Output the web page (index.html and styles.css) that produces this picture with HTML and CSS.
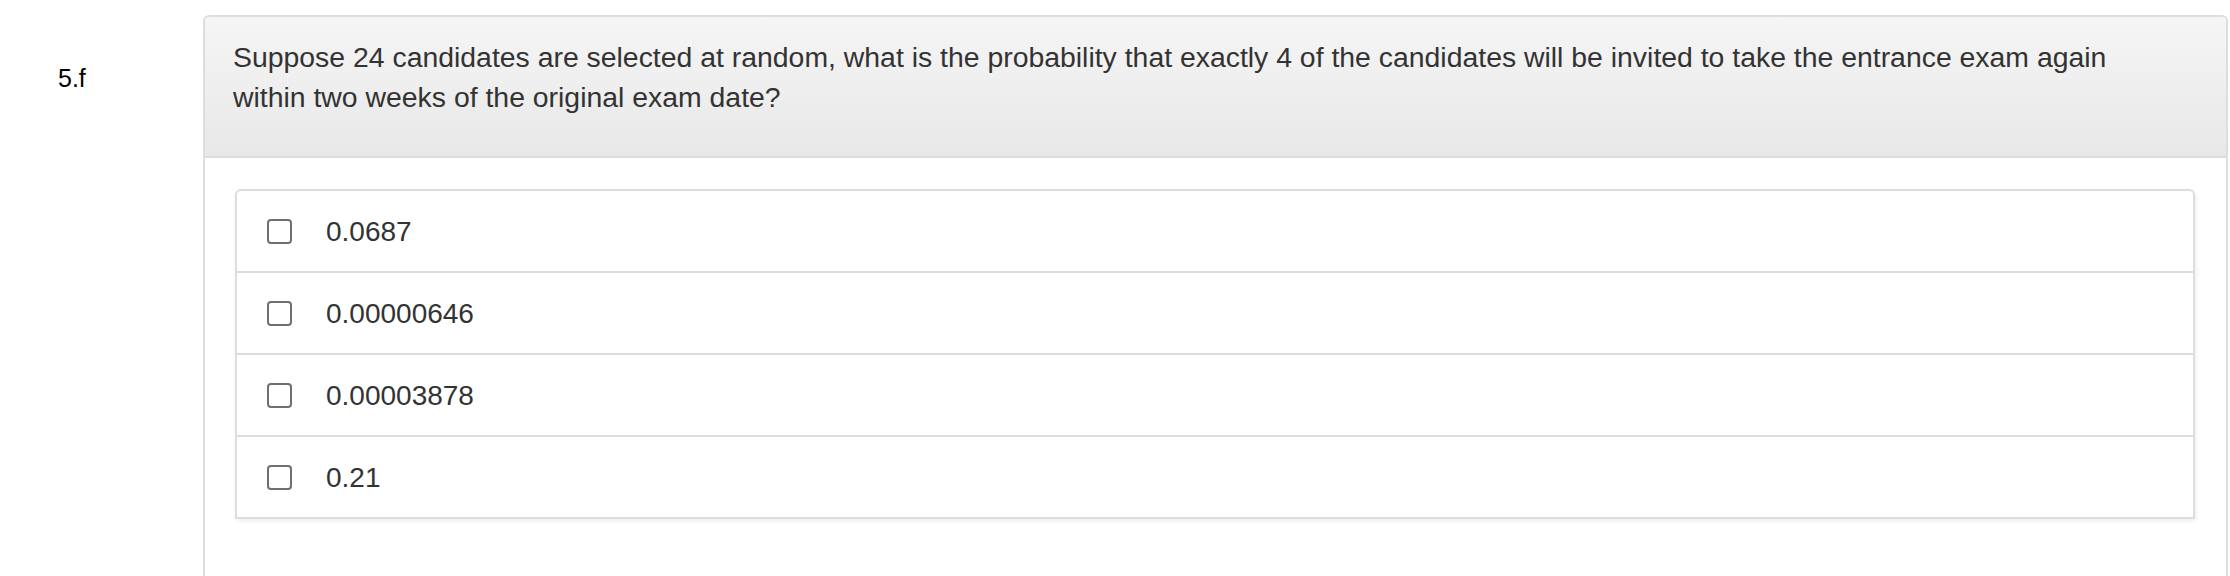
FILE: index.html
```html
<!DOCTYPE html>
<html lang="en">
<head>
<meta charset="utf-8">
<title>Question 5.f</title>
<link rel="stylesheet" href="styles.css">
</head>
<body>
<div class="row">
  <div class="qnum">5.f</div>
  <div class="panel">
    <div class="panel-heading">
      Suppose 24 candidates are selected at random, what is the probability that exactly 4 of the candidates will be invited to take the entrance exam again within two weeks of the original exam date?
    </div>
    <div class="panel-body">
      <ul class="options">
        <li class="option"><span class="box"></span><span class="label">0.0687</span></li>
        <li class="option"><span class="box"></span><span class="label">0.00000646</span></li>
        <li class="option"><span class="box"></span><span class="label">0.00003878</span></li>
        <li class="option"><span class="box"></span><span class="label">0.21</span></li>
      </ul>
    </div>
  </div>
</div>
</body>
</html>
```
FILE: styles.css
```css
html, body {
  margin: 0;
  padding: 0;
  background: #fff;
}
body {
  font-family: "Liberation Sans", Arial, Helvetica, sans-serif;
  color: #333;
  overflow: hidden;
}
.row {
  display: flex;
  align-items: flex-start;
}
.qnum {
  box-sizing: border-box;
  width: 203px;
  flex: 0 0 203px;
  padding: 60px 0 0 58px;
  font-size: 25px;
  line-height: 36px;
  color: #000;
}
.panel {
  flex: 1;
  margin: 15px 2px 0 0;
  border: 2px solid #dddddd;
  border-bottom: none;
  border-radius: 6px 6px 0 0;
  background: #fff;
}
.panel-heading {
  padding: 20px 70px 39px 28px;
  font-size: 28.4px;
  line-height: 40px;
  color: #333;
  background: linear-gradient(to bottom, #f5f5f5 0%, #e8e8e8 100%);
  border-bottom: 2px solid #dddddd;
  border-radius: 5px 5px 0 0;
}
.panel-body {
  padding: 31px 31px 90px 30px;
}
.options {
  list-style: none;
  margin: 0;
  padding: 0;
  border: 2px solid #dddddd;
  border-radius: 6px 6px 0 0;
  box-shadow: 1px 2px 4px rgba(0, 0, 0, 0.07);
}
.option {
  display: flex;
  align-items: center;
  height: 80px;
  padding-left: 30px;
  border-top: 2px solid #dddddd;
}
.option:first-child {
  border-top: none;
}
.box {
  box-sizing: border-box;
  width: 25px;
  height: 25px;
  flex: 0 0 25px;
  border: 2px solid #6f6f6f;
  border-radius: 4px;
  background: #fff;
  margin-top: 1px;
}
.label {
  margin-left: 34px;
  font-size: 28px;
  line-height: 40px;
  color: #333;
  margin-top: 2px;
}
```
